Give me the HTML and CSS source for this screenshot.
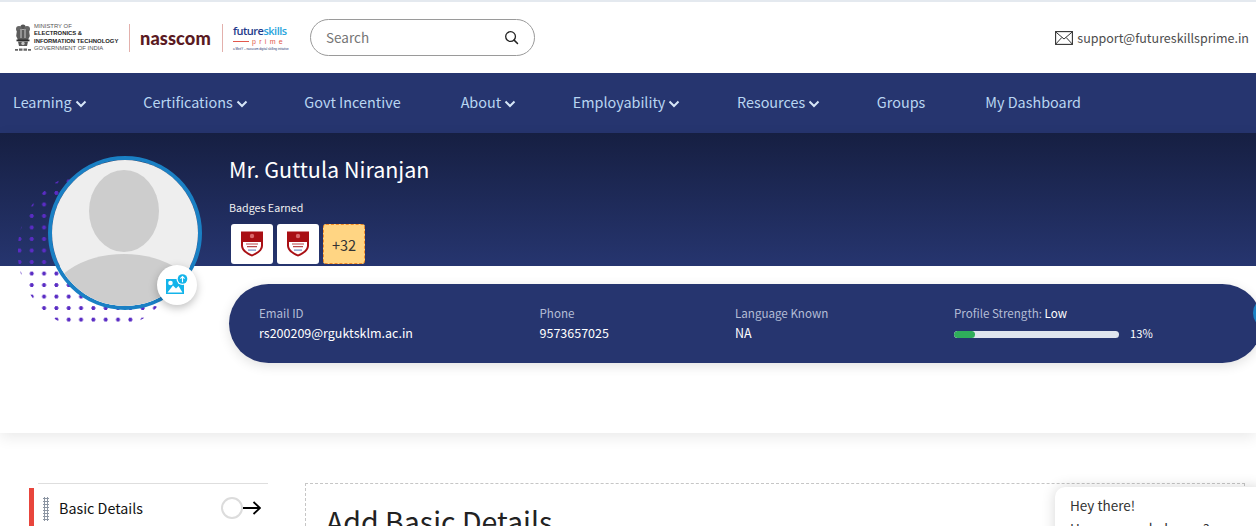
FILE: index.html
```html
<!DOCTYPE html>
<html lang="en">
<head>
<meta charset="utf-8">
<title>Profile</title>
<link rel="stylesheet" href="styles.css">
</head>
<body>
<header class="topbar">
  <div class="logo-gov">
    <svg class="emblem" viewBox="0 0 18 28" width="18" height="28">
      <circle cx="9" cy="3" r="2.600" fill="#555"/>
      <circle cx="5" cy="5" r="3" fill="#666"/>
      <circle cx="13" cy="5" r="3" fill="#666"/>
      <path d="M3 6h12l.8 6-1.800 4H4l-1.800-4z" fill="#5c5c5c"/>
      <path d="M6.500 5h1v9h-1zM10.500 5h1v9h-1z" fill="#c9c9c9"/>
      <rect x="2.500" y="15.500" width="13" height="1.800" fill="#2c2c2c"/>
      <path d="M4 17.500h10l-1 4.500H5z" fill="#555"/>
      <circle cx="9" cy="19.500" r="1.700" fill="#c4c4c4"/>
      <path d="M1 25h3v1.800H1zM5 24.500h3.500v2.300H5zM9.500 24.500H13v2.300H9.500zM14 25h3v1.800h-3z" fill="#666"/>
    </svg>
    <div class="gov-text">
      <span>MINISTRY OF</span>
      <b>ELECTRONICS &amp;</b>
      <b>INFORMATION TECHNOLOGY</b>
      <span>GOVERNMENT OF INDIA</span>
    </div>
  </div>
  <div class="logo-divider"></div>
  <div class="logo-nasscom">nasscom</div>
  <div class="logo-divider"></div>
  <div class="logo-fs">
    <div class="fs-name"><span class="fs-a">future</span><span class="fs-b">skills</span></div>
    <div class="fs-prime"><i></i><span>prime</span></div>
    <div class="fs-tag">a MeitY – nasscom digital skilling initiative</div>
  </div>
  <div class="search">
    <span class="search-text">Search</span>
    <svg viewBox="0 0 16 16" width="15" height="15"><circle cx="7" cy="7" r="5.200" fill="none" stroke="#222" stroke-width="1.400"/><path d="M10.800 10.800 14.400 14.400" stroke="#222" stroke-width="1.600" stroke-linecap="round"/></svg>
  </div>
  <div class="support">
    <svg viewBox="0 0 18 14" width="18" height="14"><rect x=".6" y=".6" width="16.800" height="12.800" fill="none" stroke="#333" stroke-width="1.100"/><path d="M.8 1 9 8l8.200-7M.8 13l6-6.500M17.200 13l-6-6.500" fill="none" stroke="#333" stroke-width="1"/></svg>
    <span>support@futureskillsprime.in</span>
  </div>
</header>

<nav class="mainnav">
  <a class="nav-item has-menu">Learning<svg class="chev" viewBox="0 0 12 8"><path d="M1.500 1.500 6 6l4.500-4.500"/></svg></a>
  <a class="nav-item has-menu">Certifications<svg class="chev" viewBox="0 0 12 8"><path d="M1.500 1.500 6 6l4.500-4.500"/></svg></a>
  <a class="nav-item">Govt Incentive</a>
  <a class="nav-item has-menu">About<svg class="chev" viewBox="0 0 12 8"><path d="M1.500 1.500 6 6l4.500-4.500"/></svg></a>
  <a class="nav-item has-menu">Employability<svg class="chev" viewBox="0 0 12 8"><path d="M1.500 1.500 6 6l4.500-4.500"/></svg></a>
  <a class="nav-item has-menu">Resources<svg class="chev" viewBox="0 0 12 8"><path d="M1.500 1.500 6 6l4.500-4.500"/></svg></a>
  <a class="nav-item">Groups</a>
  <a class="nav-item">My Dashboard</a>
</nav>

<section class="profile">
  <div class="hero">
    <h1 class="name">Mr. Guttula Niranjan</h1>
    <div class="badges-label">Badges Earned</div>
    <div class="badges">
      <div class="badge"><svg viewBox="0 0 24 26" width="24" height="26"><path d="M1 .5h22v14c0 5.500-6 9-11 11-5-2-11-5.500-11-11z" fill="#a90f14"/><path d="M3 11h18v3.500c0 4.500-5 7-9 9-4-2-9-4.500-9-9z" fill="#fff"/><path d="M6 12.500h12v1H6zM7 15h10v1.200H7z" fill="#b8474a"/><path d="M8 18.500h8v1.200H8z" fill="#6f8cc4"/><circle cx="12" cy="5" r="2.200" fill="#d9686b"/></svg></div>
      <div class="badge"><svg viewBox="0 0 24 26" width="24" height="26"><path d="M1 .5h22v14c0 5.500-6 9-11 11-5-2-11-5.500-11-11z" fill="#a90f14"/><path d="M3 11h18v3.500c0 4.500-5 7-9 9-4-2-9-4.500-9-9z" fill="#fff"/><path d="M6 12.500h12v1H6zM7 15h10v1.200H7z" fill="#b8474a"/><path d="M8 18.500h8v1.200H8z" fill="#6f8cc4"/><circle cx="12" cy="5" r="2.200" fill="#d9686b"/></svg></div>
      <div class="badge badge-more">+32</div>
    </div>
  </div>
  <div class="dots"></div>
  <div class="avatar">
    <svg viewBox="0 0 146 146" width="146" height="146">
      <rect width="146" height="146" fill="#eeeeee"/>
      <ellipse cx="72" cy="51" rx="35" ry="41" fill="#cdcdcd"/>
      <ellipse cx="72" cy="148" rx="78" ry="54" fill="#cdcdcd"/>
    </svg>
  </div>
  <button class="upload" type="button">
    <svg viewBox="0 0 22 22" width="22" height="22">
      <rect x="0" y="5" width="18" height="15" fill="#14b4ea"/>
      <circle cx="4.500" cy="9" r="2.300" fill="#fff"/>
      <path d="M1.500 18.500 7 11.500l3 3 2.500-2.500 4 6.500z" fill="#fff"/>
      <circle cx="16.500" cy="5" r="6" fill="#fff"/>
      <circle cx="16.500" cy="5" r="4.800" fill="#14b4ea"/>
      <path d="M16.500 8.300V2.500M14.400 4.600l2.100-2.100 2.100 2.100" fill="none" stroke="#fff" stroke-width="1.100"/>
    </svg>
  </button>
  <div class="info-row">
    <div class="info-card">
      <div class="info info-email"><div class="info-label">Email ID</div><div class="info-value">rs200209@rguktsklm.ac.in</div></div>
      <div class="info info-phone"><div class="info-label">Phone</div><div class="info-value">9573657025</div></div>
      <div class="info info-lang"><div class="info-label">Language Known</div><div class="info-value">NA</div></div>
      <div class="info info-strength">
        <div class="info-label">Profile Strength: <span class="strength-level">Low</span></div>
        <div class="strength-row">
          <div class="bar"><div class="bar-fill" style="width:13%"></div></div>
          <span class="pct">13%</span>
        </div>
      </div>
      <span class="edge-dot"></span>
    </div>
  </div>
</section>

<main class="content">
  <aside class="side">
    <div class="side-item">
      <span class="grip"></span>
      <span class="side-label">Basic Details</span>
      <span class="ring"></span>
      <svg class="arrow" viewBox="0 0 18 14" width="18" height="14"><path d="M0 7h17M10.500 1 17 7l-6.500 6" fill="none" stroke="#000" stroke-width="1.800"/></svg>
    </div>
  </aside>
  <div class="panel">
    <h2 class="panel-title">Add Basic Details</h2>
  </div>
</main>

<div class="chat">
  <p class="chat-hey">Hey there!</p>
  <p class="chat-line">How can we help you?</p>
</div>
</body>
</html>
```
FILE: styles.css
```css
* { box-sizing: border-box; }
html, body { height: 526px; overflow: hidden; }
body {
  margin: 0;
  background: #fff;
  font-family: "Noto Sans CJK SC", "Noto Sans", sans-serif;
  color: #222;
  position: relative;
}

.topbar {
  height: 73px;
  border-top: 2px solid #e4e9ef;
  display: flex;
  align-items: center;
  padding: 0 7px 0 14px;
  background: #fff;
}
.logo-gov { display: flex; align-items: center; gap: 2px; width: 105px; flex: none; }
.emblem { flex: none; }
.gov-text { display: flex; flex-direction: column; font-family: "Liberation Sans", sans-serif; font-size: 5.900px; line-height: 7.400px; color: #555; white-space: nowrap; }
.gov-text b { color: #222; font-weight: 700; }
.logo-divider { width: 1px; height: 28px; background: #e3b0ac; flex: none; margin: 0 10px; }
.logo-nasscom { font-family: "Lato", sans-serif; font-weight: 900; font-size: 18.200px; color: #5a1a22; width: 72px; flex: none; letter-spacing: .1px; }
.logo-fs { width: 58px; flex: none; margin-right: 20px; display: flex; flex-direction: column; }
.fs-name { font-family: "Open Sans", sans-serif; font-size: 11px; line-height: 13px; font-weight: 600; letter-spacing: -.5px; white-space: nowrap; }
.fs-a { color: #233a8b; }
.fs-b { color: #2aa4dc; }
.fs-prime { display: flex; align-items: center; gap: 3px; font-family: "Liberation Sans", sans-serif; font-size: 7px; line-height: 9px; color: #e2574c; }
.fs-prime i { width: 16px; height: 1px; background: #e2574c; flex: none; }
.fs-prime span { letter-spacing: 3.300px; }
.fs-tag { font-family: "Liberation Sans", sans-serif; font-size: 3px; line-height: 6px; color: #26356f; white-space: nowrap; }

.search {
  width: 225px;
  height: 37px;
  margin-left: -1px;
  margin-top: -1px;
  border: 1px solid #9a9a9a;
  border-radius: 19px;
  display: flex;
  align-items: center;
  justify-content: space-between;
  padding: 0 15px 0 15px;
}
.search-text { font-size: 13.500px; color: #757575; }
.support { margin-left: auto; display: flex; align-items: center; gap: 4px; font-size: 12.500px; color: #4d4d4d; }

.mainnav {
  height: 60px;
  background: #26356f;
  display: flex;
  align-items: center;
  gap: 60px;
  padding: 0 0 4px 13px;
}
.nav-item { display: flex; align-items: center; gap: 3px; font-size: 14.400px; color: #b9d6f2; white-space: nowrap; }
.has-menu { margin-right: -3.400px; }
.chev { width: 12px; height: 8px; margin-top: 6px; fill: none; stroke: #d6e6f7; stroke-width: 2; }

.profile {
  position: relative;
  height: 300px;
  box-shadow: 0 4px 14px rgba(0, 0, 0, .09);
  background: #fff;
}
.hero {
  height: 133px;
  background: linear-gradient(#161f42, #26356f);
  padding: 20px 0 0 229px;
}
.name { margin: 0; font-size: 21.500px; line-height: 31px; font-weight: 400; color: #fff; }
.badges-label { margin-top: 15px; font-size: 10.700px; line-height: 17px; color: #f0f0f0; }
.badges { display: flex; gap: 4px; margin: 8px 0 0 2px; }
.badge { width: 42px; height: 40px; background: #fff; border-radius: 3px; display: flex; align-items: center; justify-content: center; }
.badge-more { background: #ffd583; border: 1px dashed #f08a24; font-size: 14.500px; color: #333; }

.dots {
  position: absolute;
  left: 17.600px;
  top: 37px;
  width: 162px;
  height: 153px;
  clip-path: circle(81px at 81px 81px);
  background-image: radial-gradient(circle, #5a2cc4 0 1.700px, transparent 2.300px);
  background-size: 12.330px 11.530px;
  background-position: -4.770px 5.670px;
}
.avatar {
  position: absolute;
  left: 48px;
  top: 23px;
  width: 154px;
  height: 154px;
  border: 4px solid #1a80c4;
  border-radius: 50%;
  overflow: hidden;
}
.avatar svg { display: block; }
.upload {
  position: absolute;
  left: 157px;
  top: 132px;
  width: 40px;
  height: 40px;
  padding: 0;
  border: 0;
  border-radius: 50%;
  background: #fff;
  box-shadow: 0 3px 8px rgba(0, 0, 0, .25);
  display: flex;
  align-items: center;
  justify-content: center;
}

.info-row { padding: 18px 0 0 229px; margin-right: -6px; }
.info-card {
  position: relative;
  height: 79px;
  background: #26356f;
  border-radius: 40px;
  box-shadow: 0 3px 12px rgba(0, 0, 0, .12);
  padding-left: 30px;
  display: flex;
  align-items: flex-start;
  padding-top: 20px;
}
.info-label { font-size: 11.600px; line-height: 19px; color: #b4bdd6; }
.info-value { font-size: 12.500px; line-height: 20px; margin-top: 0; color: #fff; }
.info-email { width: 280.500px; }
.info-phone { width: 195.500px; }
.info-lang { width: 219px; }
.strength-level { color: #fff; }
.strength-row { display: flex; align-items: center; gap: 11px; height: 20px; margin-top: 0; }
.bar { width: 165px; height: 7px; background: #dfe5ee; border-radius: 4px; overflow: hidden; margin-top: 3px; }
.bar-fill { height: 100%; background: #2fae5b; border-radius: 4px; }
.pct { font-size: 11.200px; color: #fff; }
.edge-dot { position: absolute; left: 1024px; top: 16px; width: 20px; height: 26px; border-radius: 50%; background: #1a80c4; }

.content { display: flex; padding: 50px 11px 0 29px; height: 93px; overflow: hidden; }
.side { width: 239px; flex: none; margin-right: 37px; padding-top: 0; }
.side::before { content: ""; display: block; height: 1px; background: #dedede; margin-left: 9px; }
.side-item { height: 40px; margin-top: 4px; border-left: 5px solid #e8453c; display: flex; align-items: center; padding-left: 9px; }
.grip {
  width: 6px;
  height: 24px;
  margin-top: 1px;
  flex: none;
  background-image: radial-gradient(circle, #8d96a3 0 1px, transparent 1.100px);
  background-size: 3px 3px;
}
.side-label { margin-left: 10px; font-size: 14.300px; line-height: 20px; color: #111; width: 162px; flex: none; }
.ring { width: 22px; height: 22px; border: 2px solid #dcdcdc; border-radius: 50%; flex: none; }
.arrow { flex: none; }
.panel { flex: 1; border: 1px dashed #c6c6c6; border-bottom: 0; padding: 18px 20px 0; }
.panel-title { margin: 0; font-size: 28.500px; line-height: 38px; font-weight: 400; color: #222; white-space: nowrap; }

.chat {
  position: absolute;
  left: 1055px;
  top: 487px;
  width: 210px;
  height: 60px;
  background: #fff;
  border-radius: 10px;
  box-shadow: 0 0 14px rgba(0, 0, 0, .16);
  padding: 7.500px 15px;
}
.chat-hey { margin: 0; font-size: 13.500px; line-height: 20px; color: #333; }
.chat-line { margin: 3.500px 0 0; font-size: 13.500px; line-height: 20px; color: #333; }
```
